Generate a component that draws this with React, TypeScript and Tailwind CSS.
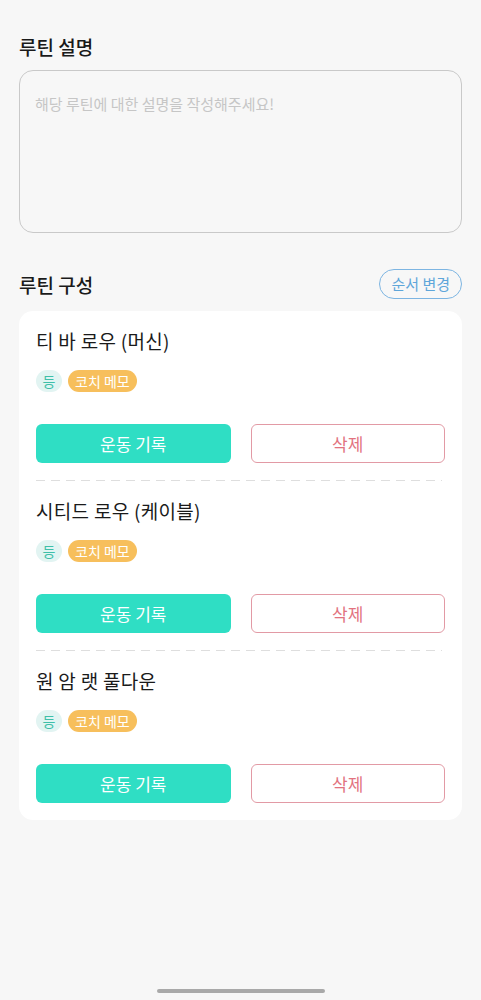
import React from 'react';

const font = { fontFamily: '"Noto Sans CJK KR", "Noto Sans", sans-serif' };

const exercises = [
  { id: 1, name: '티 바 로우 (머신)', part: '등' },
  { id: 2, name: '시티드 로우 (케이블)', part: '등' },
  { id: 3, name: '원 암 랫 풀다운', part: '등' },
];

const App: React.FC = () => {
  return (
    <div
      className="min-h-screen w-full bg-[#f7f7f7] flex flex-col text-[#1a1a1a] font-['Noto_Sans_CJK_KR',sans-serif]"
      style={font}
    >
      <main className="px-[19px] pt-[33px]">
        {/* Routine description */}
        <h2 className="text-[19px] leading-[27px] font-medium">루틴 설명</h2>
        <textarea
          className="mt-[10px] block w-full h-[163px] resize-none rounded-[14px] border border-[#c9c9c9] bg-transparent px-[15px] pt-[23px] text-[15px] leading-[20px] placeholder:text-[#c6c6c6] outline-none"
          placeholder="해당 루틴에 대한 설명을 작성해주세요!"
        />

        {/* Routine composition */}
        <div className="mt-[36px] flex items-center justify-between h-[30px]">
          <h2 className="text-[19px] leading-[27px] font-medium">루틴 구성</h2>
          <button className="h-[30px] px-[11px] rounded-full border border-[#7db5e2] text-[#5ea6da] text-[15px] leading-[20px]">
            순서 변경
          </button>
        </div>

        <section className="mt-[12px] bg-white rounded-[14px] px-[17px]">
          {exercises.map((ex, i) => (
            <div key={ex.id}>
              {i > 0 && (
                <div className="h-px w-[406px] bg-[repeating-linear-gradient(90deg,#dedede_0_9px,transparent_9px_15px)]" />
              )}
              <div className="py-[17px]">
                <h3 className="text-[19px] leading-[25px] tracking-[0.3px]">{ex.name}</h3>
                <div className="mt-[17px] flex items-center gap-[6px]">
                  <span className="h-[22px] min-w-[26px] px-[6px] rounded-full bg-[#e2f4f2] text-[#3ebfa9] text-[14px] leading-[22px] text-center">
                    {ex.part}
                  </span>
                  <span className="h-[22px] px-[7px] rounded-full bg-[#f7bf5c] text-white text-[14px] leading-[22px]">
                    코치 메모
                  </span>
                </div>
                <div className="mt-[32px] grid grid-cols-2 gap-[20px]">
                  <button className="h-[39px] rounded-[6px] bg-[#2fdec4] text-white text-[17px]">
                    운동 기록
                  </button>
                  <button className="h-[39px] rounded-[6px] border border-[#e29aa5] bg-white text-[#e2737f] text-[17px]">
                    삭제
                  </button>
                </div>
              </div>
            </div>
          ))}
        </section>
      </main>

      {/* Home indicator */}
      <div className="mt-auto pb-[7px] pt-4 flex justify-center">
        <div className="w-[168px] h-[4px] rounded-full bg-[#a9a9a9]" />
      </div>
    </div>
  );
};

export default App;
